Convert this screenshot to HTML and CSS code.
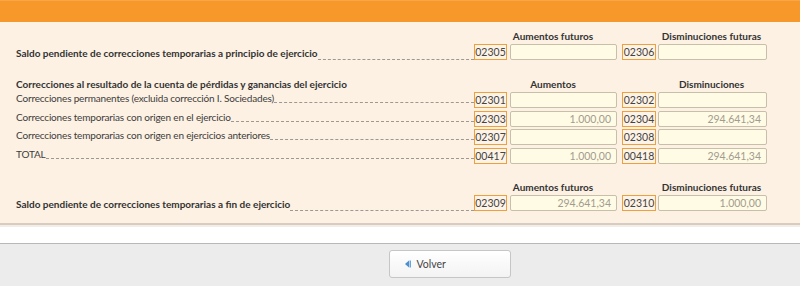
FILE: index.html
```html
<!DOCTYPE html>
<html lang="es">
<head>
<meta charset="UTF-8">
<title>Correcciones temporarias</title>
<link rel="stylesheet" href="styles.css">
</head>
<body>
<div class="topbar"></div>

<div class="panel">
  <div class="heads heads-first">
    <span class="head head-a">Aumentos futuros</span>
    <span class="head head-b">Disminuciones futuras</span>
  </div>
  <div class="row row-bold">
    <div class="label"><span>Saldo pendiente de correcciones temporarias a principio de ejercicio</span><span class="fill"></span></div>
    <div class="code">02305</div>
    <div class="field"></div>
    <div class="code code-b">02306</div>
    <div class="field field-b"></div>
  </div>

  <div class="heads heads-mid">
    <span class="section-title">Correcciones al resultado de la cuenta de pérdidas y ganancias del ejercicio</span>
    <span class="head head-a">Aumentos</span>
    <span class="head head-b">Disminuciones</span>
  </div>
  <div class="row">
    <div class="label"><span>Correcciones permanentes (excluida corrección I. Sociedades)</span><span class="fill"></span></div>
    <div class="code">02301</div>
    <div class="field"></div>
    <div class="code code-b">02302</div>
    <div class="field field-b"></div>
  </div>
  <div class="row">
    <div class="label"><span>Correcciones temporarias con origen en el ejercicio</span><span class="fill"></span></div>
    <div class="code">02303</div>
    <div class="field">1.000,00</div>
    <div class="code code-b">02304</div>
    <div class="field field-b">294.641,34</div>
  </div>
  <div class="row">
    <div class="label"><span>Correcciones temporarias con origen en ejercicios anteriores</span><span class="fill"></span></div>
    <div class="code">02307</div>
    <div class="field"></div>
    <div class="code code-b">02308</div>
    <div class="field field-b"></div>
  </div>
  <div class="row">
    <div class="label"><span>TOTAL</span><span class="fill"></span></div>
    <div class="code">00417</div>
    <div class="field">1.000,00</div>
    <div class="code code-b">00418</div>
    <div class="field field-b">294.641,34</div>
  </div>

  <div class="heads heads-last">
    <span class="head head-a">Aumentos futuros</span>
    <span class="head head-b">Disminuciones futuras</span>
  </div>
  <div class="row row-bold">
    <div class="label"><span>Saldo pendiente de correcciones temporarias a fin de ejercicio</span><span class="fill"></span></div>
    <div class="code">02309</div>
    <div class="field">294.641,34</div>
    <div class="code code-b">02310</div>
    <div class="field field-b">1.000,00</div>
  </div>
</div>

<div class="gap"></div>

<div class="footer">
  <button class="btn" type="button">
    <svg class="btn-icon" width="6" height="8" viewBox="0 0 6 8"><polygon points="0,4 4,0.5 4,7.5" fill="#4a8fd0"/><rect x="4.6" y="0.5" width="1.2" height="7" fill="#4a8fd0"/></svg>
    Volver
  </button>
</div>
</body>
</html>
```

FILE: styles.css
```css
html, body {
  margin: 0;
  padding: 0;
  font-family: Lato, "Open Sans", sans-serif;
  font-size: 10px;
  color: #333;
  background-color: #fff;
}

.topbar {
  height: 21px;
  background-color: #f7982b;
  border-top: 1px solid #f9a744;
}

.panel {
  background-color: #fdf1e3;
  padding: 6px 33px 12px 16px;
  border-top: 1px solid #fff3e6;
  border-bottom: 2px solid #d6ccc2;
}

/* column headers */
.heads {
  display: flex;
  align-items: center;
  height: 14px;
  font-weight: bold;
}

.heads-mid {
  margin-top: 17px;
}

.heads-last {
  margin-top: 16px;
}

.section-title {
  flex: 1;
}

.heads-first .head-a,
.heads-last .head-a {
  margin-left: auto;
}

.head {
  text-align: center;
}

.head-a {
  width: 128px;
}

.head-b {
  width: 111px;
  margin-left: 39px;
}

/* data rows */
.row {
  display: flex;
  align-items: flex-start;
  height: 16px;
  margin-top: 2.67px;
}

.heads + .row {
  margin-top: 1px;
}

.label {
  flex: 1;
  display: flex;
  align-items: flex-end;
  height: 12px;
  line-height: 12px;
  white-space: nowrap;
  color: #3c3c3c;
  letter-spacing: -0.17px;
}

.row-bold .label {
  font-weight: bold;
  height: 16px;
  line-height: 13px;
  color: #333;
  letter-spacing: 0;
}

.fill {
  flex: 1;
  border-bottom: 1px dashed #9d9892;
  margin-bottom: 1px;
}

.row-bold .fill {
  margin-bottom: 0;
}

.code {
  box-sizing: border-box;
  width: 33px;
  height: 16px;
  border: 1px solid #efa03e;
  background-color: #fdf3e6;
  color: #444;
  text-align: center;
  line-height: 14px;
  font-size: 10.5px;
}

.code-b {
  width: 34px;
  margin-left: 5px;
}

.field {
  box-sizing: border-box;
  width: 107px;
  height: 16px;
  margin-left: 3px;
  border: 1px solid #c8bfab;
  border-radius: 2px;
  background-color: #fffbe4;
  color: #a29c90;
  text-align: right;
  line-height: 14px;
  padding-right: 5px;
  font-size: 10.5px;
}

.field-b {
  width: 109px;
  margin-left: 2px;
}

.gap {
  height: 16px;
  border-top: 2px solid #f4ede6;
}

.footer {
  height: 42px;
  background-color: #ececec;
  border-top: 1px solid #b8b8b8;
  display: flex;
  justify-content: center;
  padding: 6px 0 0 99px;
}

.btn {
  width: 122px;
  height: 28px;
  border: 1px solid #c6c6c6;
  border-radius: 3px;
  background: linear-gradient(#ffffff, #f3f3f3);
  font-family: Lato, "Open Sans", sans-serif;
  font-size: 10.5px;
  color: #444;
  display: flex;
  align-items: center;
  justify-content: flex-start;
  gap: 6px;
  padding: 0 0 0 15px;
}

.btn-icon {
  display: block;
}
```
